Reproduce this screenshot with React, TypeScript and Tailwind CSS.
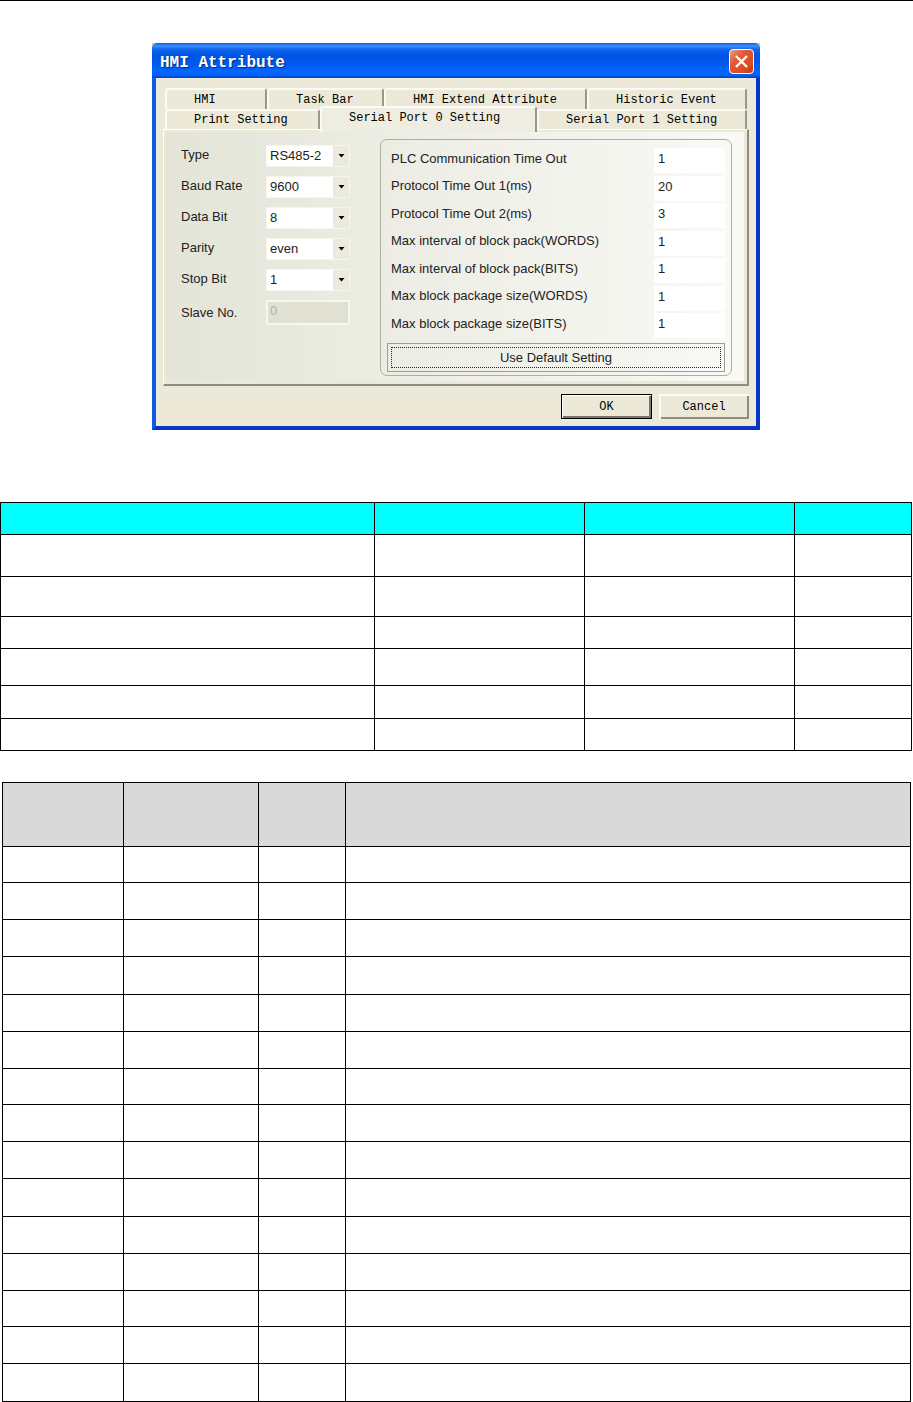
import React, { useState } from 'react';

type Setting = { id: string; label: string; value: string };

const portSettings: Setting[] = [
  { id: 'type', label: 'Type', value: 'RS485-2' },
  { id: 'baud', label: 'Baud Rate', value: '9600' },
  { id: 'data', label: 'Data Bit', value: '8' },
  { id: 'parity', label: 'Parity', value: 'even' },
  { id: 'stop', label: 'Stop Bit', value: '1' },
];

const protocolSettings: Setting[] = [
  { id: 'plc', label: 'PLC Communication Time Out', value: '1' },
  { id: 'time1', label: 'Protocol Time Out 1(ms)', value: '20' },
  { id: 'time2', label: 'Protocol Time Out 2(ms)', value: '3' },
  { id: 'intWords', label: 'Max interval of block pack(WORDS)', value: '1' },
  { id: 'intBits', label: 'Max interval of block pack(BITS)', value: '1' },
  { id: 'sizeWords', label: 'Max block package size(WORDS)', value: '1' },
  { id: 'sizeBits', label: 'Max block package size(BITS)', value: '1' },
];

const backTabs = ['HMI', 'Task Bar', 'HMI Extend Attribute', 'Historic Event'];
const frontTabs = ['Print Setting', 'Serial Port 0 Setting', 'Serial Port 1 Setting'];

const summaryRows = ['h-[42px]', 'h-[40px]', 'h-[32px]', 'h-[37px]', 'h-[33px]', 'h-[32px]'];
const detailRows = [
  'h-[36px]', 'h-[37px]', 'h-[37px]', 'h-[38px]', 'h-[37px]',
  'h-[37px]', 'h-[36px]', 'h-[37px]', 'h-[37px]', 'h-[38px]',
  'h-[37px]', 'h-[37px]', 'h-[36px]', 'h-[37px]', 'h-[38px]',
];

function Tab({ label, selected, onSelect }: { label: string; selected: boolean; onSelect: () => void }) {
  return (
    <button
      type="button"
      role="tab"
      aria-selected={selected}
      onClick={onSelect}
      className={
        'min-w-0 whitespace-nowrap rounded-t-[3px] border-l-2 border-t-2 border-r-2 border-l-[#fbfaf5] border-t-[#fbfaf5] border-r-[#99978a] pl-[27px] text-left leading-[18px] ' +
        (selected ? 'relative z-10 -mt-[3px] -mb-[3px] bg-[#efede2] pb-1' : 'bg-[#ece9d8]')
      }
    >
      {label}
    </button>
  );
}

function SelectRow({ id, label, value }: Setting) {
  return (
    <div className="flex h-[22px] items-center">
      <label htmlFor={id} className="w-[85px] pb-0.5">{label}</label>
      <div className="grid h-full w-[84px] items-center">
        <select
          id={id}
          defaultValue={value}
          className="col-start-1 row-start-1 h-full w-full appearance-none rounded-none border border-[#f6f5ee] bg-white pl-[3px]"
        >
          <option>{value}</option>
        </select>
        <span className="pointer-events-none col-start-1 row-start-1 mr-px flex h-5 w-4 items-center justify-center justify-self-end bg-[#eceade]">
          <svg width="7" height="4" viewBox="0 0 7 4" aria-hidden="true">
            <path d="M0.5 0H6.5L3.5 3.5Z" fill="#000" />
          </svg>
        </span>
      </div>
    </div>
  );
}

function AttributeDialog() {
  const [active, setActive] = useState('Serial Port 0 Setting');
  return (
    <div className="mx-auto w-full max-w-[608px] bg-[#c9c9c4]">
      <section
        role="dialog"
        aria-label="HMI Attribute"
        className="overflow-hidden rounded-t-[6px] bg-[#0831c6] text-[#222]"
      >
        <header className="flex h-[35px] items-center justify-between bg-[linear-gradient(180deg,#0a5fe0_0%,#3c8ff8_8%,#0a62ee_20%,#0054e3_35%,#0058ee_60%,#0266ff_80%,#0060f6_92%,#0040c4_100%)] pl-2 pr-1.5">
          <h1 className="pt-1 font-['Liberation_Mono',monospace] text-[16px] font-bold leading-5 text-white [text-shadow:1px_1px_1px_#0a2a80]">
            HMI Attribute
          </h1>
          <button
            type="button"
            aria-label="Close"
            className="mt-[2px] flex size-[25px] items-center justify-center rounded-[4px] border border-white bg-[linear-gradient(135deg,#f0987c_0%,#e25b34_35%,#dc4a20_75%,#b83a12_100%)]"
          >
            <svg width="15" height="15" viewBox="0 0 15 15" aria-hidden="true">
              <path d="M2 2L13 13M13 2L2 13" stroke="#fff" strokeWidth="2.4" />
            </svg>
          </button>
        </header>

        <div className="border-x-4 border-b-4 border-l-[#1159e8] border-r-[#0a36c8] border-b-[#0a36c8] bg-[#ece9d8] px-[7px] pb-[7px] pt-2.5 bg-clip-padding">
          <div role="tablist" className="px-0.5 font-['Liberation_Mono',monospace] text-[12px] text-black">
            <div className="grid h-[21px] grid-cols-[102fr_117fr_203fr_160fr]">
              {backTabs.map((t) => (
                <Tab key={t} label={t} selected={active === t} onSelect={() => setActive(t)} />
              ))}
            </div>
            <div className="grid h-5 grid-cols-[155fr_217fr_210fr]">
              {frontTabs.map((t) => (
                <Tab key={t} label={t} selected={active === t} onSelect={() => setActive(t)} />
              ))}
            </div>
          </div>

          <div
            role="tabpanel"
            className="border-b-2 border-l border-r-2 border-t border-b-[#8e8c7e] border-l-white border-r-[#8e8c7e] border-t-white pb-[3px] pl-0.5 pr-[3px] pt-0.5"
          >
            <div className="flex gap-[30px] bg-linear-to-r from-[#e4e5d8] to-[#f9f9f6] pb-[5px] pl-[15px] pr-3 pt-[7px] text-[13px] leading-5">
              <div className="flex flex-col gap-[9px] pt-1.5">
                {portSettings.map((s) => (
                  <SelectRow key={s.id} {...s} />
                ))}
                <div className="flex items-center">
                  <label htmlFor="slave" className="w-[85px]">Slave No.</label>
                  <input
                    id="slave"
                    disabled
                    defaultValue="0"
                    className="h-[25px] w-[84px] border-2 border-[#f7f7f0] bg-[#e0e1d3] pb-1 pl-0.5 text-[#b3b2a2]"
                  />
                </div>
              </div>

              <fieldset className="min-w-0 flex-1 rounded-[7px] border border-[#aeae9c] pb-[3px] pl-1.5 pr-1.5 pt-2">
                <div className="flex min-h-[190px] flex-col justify-between">
                  {protocolSettings.map((s) => (
                    <div key={s.id} className="flex h-[25px] items-center justify-between pl-1">
                      <label htmlFor={s.id} className="pb-1">{s.label}</label>
                      <input
                        id={s.id}
                        defaultValue={s.value}
                        className="h-full w-[71px] bg-white pb-1 pl-1"
                      />
                    </div>
                  ))}
                </div>
                <button
                  type="button"
                  className="mt-[5px] flex h-[29px] w-full border border-[#a09f8d] p-[3px]"
                >
                  <span className="flex h-full w-full items-center justify-center border border-dotted border-[#222244]">
                    Use Default Setting
                  </span>
                </button>
              </fieldset>
            </div>
          </div>

          <div className="mt-2 flex justify-end gap-[7px] font-['Liberation_Mono',monospace] text-[12px] text-black">
            <button
              type="button"
              className="h-[25px] w-[91px] border border-black bg-[#ece9d8] shadow-[inset_1px_1px_0_#fff,inset_-2px_-2px_0_#77756a]"
            >
              OK
            </button>
            <button
              type="button"
              className="h-[25px] w-[90px] bg-[#ece9d8] shadow-[inset_2px_2px_0_#fcfbf6,inset_-2px_-2px_0_#8e8c7e]"
            >
              Cancel
            </button>
          </div>
        </div>
      </section>
    </div>
  );
}

function GridTable({
  label,
  columns,
  headClass,
  rows,
}: {
  label: string;
  columns: string[];
  headClass: string;
  rows: string[];
}) {
  return (
    <table
      aria-label={label}
      className="w-full table-fixed border-separate border-spacing-0 border-l border-t border-black"
    >
      <colgroup>
        {columns.map((c, i) => (
          <col key={i} className={c} />
        ))}
      </colgroup>
      <thead>
        <tr className={headClass}>
          {columns.map((_, i) => (
            <th key={i} className="border-b border-r border-black p-0" />
          ))}
        </tr>
      </thead>
      <tbody>
        {rows.map((h, r) => (
          <tr key={r} className={h}>
            {columns.map((_, i) => (
              <td key={i} className="border-b border-r border-black p-0" />
            ))}
          </tr>
        ))}
      </tbody>
    </table>
  );
}

export default function App() {
  return (
    <main className="border-t border-black bg-white font-['Liberation_Sans',Arial,sans-serif]">
      <div className="pr-px pt-[42px]">
        <AttributeDialog />
        <div className="mt-[72px]">
          <GridTable
            label="Summary"
            columns={['w-[374px]', 'w-[210px]', 'w-[210px]', 'w-auto']}
            headClass="h-8 bg-[#00ffff]"
            rows={summaryRows}
          />
        </div>
        <div className="ml-0.5 mr-px mt-[31px]">
          <GridTable
            label="Details"
            columns={['w-[121px]', 'w-[135px]', 'w-[87px]', 'w-auto']}
            headClass="h-16 bg-[#d9d9d9]"
            rows={detailRows}
          />
        </div>
      </div>
    </main>
  );
}
